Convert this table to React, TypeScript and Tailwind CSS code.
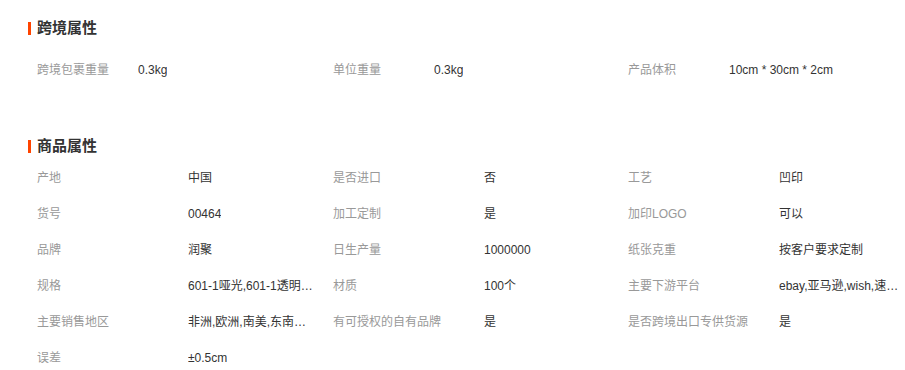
import React from 'react'

type Attr = { label: string; value: string }

const crossBorder: Attr[] = [
  { label: '跨境包裹重量', value: '0.3kg' },
  { label: '单位重量', value: '0.3kg' },
  { label: '产品体积', value: '10cm * 30cm * 2cm' },
]

const productAttrs: Attr[] = [
  { label: '产地', value: '中国' },
  { label: '是否进口', value: '否' },
  { label: '工艺', value: '凹印' },
  { label: '货号', value: '00464' },
  { label: '加工定制', value: '是' },
  { label: '加印LOGO', value: '可以' },
  { label: '品牌', value: '润聚' },
  { label: '日生产量', value: '1000000' },
  { label: '纸张克重', value: '按客户要求定制' },
  { label: '规格', value: '601-1哑光,601-1透明,601-1磨砂,602-1哑光' },
  { label: '材质', value: '100个' },
  { label: '主要下游平台', value: 'ebay,亚马逊,wish,速卖通,独立站' },
  { label: '主要销售地区', value: '非洲,欧洲,南美,东南亚,北美,东北亚,中东' },
  { label: '有可授权的自有品牌', value: '是' },
  { label: '是否跨境出口专供货源', value: '是' },
  { label: '误差', value: '±0.5cm' },
]

const SectionTitle = ({ title }: { title: string }) => (
  <div className="flex items-center h-5 pl-[28px]">
    <span className="w-[3px] h-[13px] bg-[#ff4400] mr-[6px]" />
    <span className="text-[15px] font-bold text-[#333]">{title}</span>
  </div>
)

const AttrCell = ({ attr, labelWidth }: { attr: Attr; labelWidth: string }) => (
  <div className="flex items-center h-9 text-xs">
    <span className={`${labelWidth} shrink-0 text-[#999] whitespace-nowrap`}>{attr.label}</span>
    <span className="max-w-[125px] truncate text-[#333]">{attr.value}</span>
  </div>
)

const App = () => {
  return (
    <div
      className="w-[905px] h-[370px] overflow-hidden bg-white"
      style={{ fontFamily: '"Liberation Sans", "Noto Sans CJK SC", sans-serif' }}
    >
      {/* 跨境属性 */}
      <div className="pt-[18px]">
        <SectionTitle title="跨境属性" />
        <div className="mt-[14px] pl-[37px] grid grid-cols-[296px_295px_300px]">
          {crossBorder.map((a) => (
            <AttrCell key={a.label} attr={a} labelWidth="w-[101px]" />
          ))}
        </div>
      </div>

      {/* 商品属性 */}
      <div className="mt-[48px]">
        <SectionTitle title="商品属性" />
        <div className="mt-[4px] pl-[37px] grid grid-cols-[296px_295px_300px]">
          {productAttrs.map((a) => (
            <AttrCell key={a.label} attr={a} labelWidth="w-[151px]" />
          ))}
        </div>
      </div>
    </div>
  )
}

export default App
